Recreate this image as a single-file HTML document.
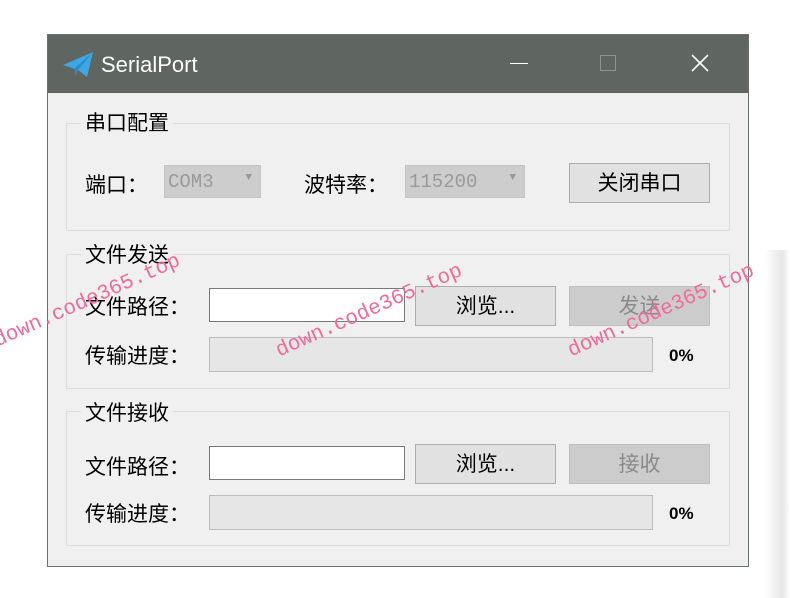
<!DOCTYPE html><html><head><meta charset="utf-8"><style>
body{margin:0;width:790px;height:598px;background:#fff;position:relative;overflow:hidden;font-family:"Liberation Sans","Noto Sans CJK SC",sans-serif;}
.a{position:absolute;box-sizing:border-box}
.win{left:47px;top:34px;width:702px;height:533px;background:#f0f0f0;border:1px solid #6a706b}
.tb{left:0;top:0;width:700px;height:58px;background:#5f6661}
.t{font-size:21px;color:#000;white-space:nowrap;line-height:1}
.grp{border:1px solid #dcdcdc;border-radius:2px}
.gt{background:#f0f0f0;padding:0 4px}
.cb{background:#cdcdcd;border:1px solid #c4c4c4;color:#9a9a9a;font-family:"Liberation Mono","Noto Sans CJK SC",monospace;font-size:19px;padding:5px 3px}
.btn{background:#e1e1e1;border:1px solid #adadad;text-align:center;font-size:21px;line-height:40px}
.dis{background:#cccccc;border:1px solid #bfbfbf;color:#8a8a8a}
.ed{background:#fff;border:1px solid #7a7a7a}
.pb{background:#e6e6e6;border:1px solid #bcbcbc}
.wm{color:#f06a9a;font-family:"Liberation Mono",monospace;font-size:21px;transform:rotate(-24deg);transform-origin:left bottom;white-space:nowrap}
</style></head><body>
<div class="a" style="left:765px;top:250px;width:25px;height:348px;background:linear-gradient(90deg,#fff,#e6e6e6 70%,#fff)"></div>
<div class="a win">
<div class="a tb">
<svg class="a" style="left:15px;top:17px" width="32" height="26" viewBox="0 0 32 26"><path d="M0 13 L30 0 L24 25 L15 18 Z" fill="#3ea6e4"/><path d="M15 18 L30 0 L12 16 L12 25 Z" fill="#2a8cc8"/></svg>
<div class="a t" style="left:53px;top:19px;color:#fff;font-size:22px">SerialPort</div>
<div class="a" style="left:462px;top:28px;width:18px;height:1px;background:#fff"></div>
<div class="a" style="left:552px;top:20px;width:16px;height:16px;border:1px solid #8c948e"></div>
<svg class="a" style="left:643px;top:19px" width="18" height="18"><path d="M1 1L17 17M17 1L1 17" stroke="#fff" stroke-width="1.6"/></svg>
</div>
<div class="a grp" style="left:18px;top:88px;width:664px;height:108px"></div>
<div class="a t gt" style="left:33px;top:78px">串口配置</div>
<div class="a t" style="left:37px;top:140px">端口：</div>
<div class="a cb" style="left:116px;top:130px;width:97px;height:33px">COM3<span style="position:absolute;right:8px;top:6px;font-size:11px">▼</span></div>
<div class="a t" style="left:256px;top:140px">波特率：</div>
<div class="a cb" style="left:357px;top:130px;width:120px;height:33px">115200<span style="position:absolute;right:8px;top:6px;font-size:11px">▼</span></div>
<div class="a btn" style="left:521px;top:128px;width:141px;height:40px">关闭串口</div>

<div class="a grp" style="left:18px;top:219px;width:664px;height:135px"></div>
<div class="a t gt" style="left:33px;top:210px">文件发送</div>
<div class="a t" style="left:37px;top:262px">文件路径：</div>
<div class="a ed" style="left:161px;top:253px;width:196px;height:34px"></div>
<div class="a btn" style="left:367px;top:251px;width:141px;height:40px">浏览...</div>
<div class="a btn dis" style="left:521px;top:251px;width:141px;height:40px">发送</div>
<div class="a t" style="left:37px;top:311px">传输进度：</div>
<div class="a pb" style="left:161px;top:302px;width:444px;height:35px"></div>
<div class="a t" style="left:621px;top:312px;font-size:17px;font-weight:bold">0%</div>

<div class="a grp" style="left:18px;top:376px;width:664px;height:135px"></div>
<div class="a t gt" style="left:33px;top:368px">文件接收</div>
<div class="a t" style="left:37px;top:422px">文件路径：</div>
<div class="a ed" style="left:161px;top:411px;width:196px;height:34px"></div>
<div class="a btn" style="left:367px;top:409px;width:141px;height:40px">浏览...</div>
<div class="a btn dis" style="left:521px;top:409px;width:141px;height:40px">接收</div>
<div class="a t" style="left:37px;top:469px">传输进度：</div>
<div class="a pb" style="left:161px;top:460px;width:444px;height:35px"></div>
<div class="a t" style="left:621px;top:470px;font-size:17px;font-weight:bold">0%</div>
</div>
<div class="a wm" style="left:0px;top:330px">down.code365.top</div>
<div class="a wm" style="left:282px;top:340px">down.code365.top</div>
<div class="a wm" style="left:574px;top:340px">down.code365.top</div>
</body></html>
